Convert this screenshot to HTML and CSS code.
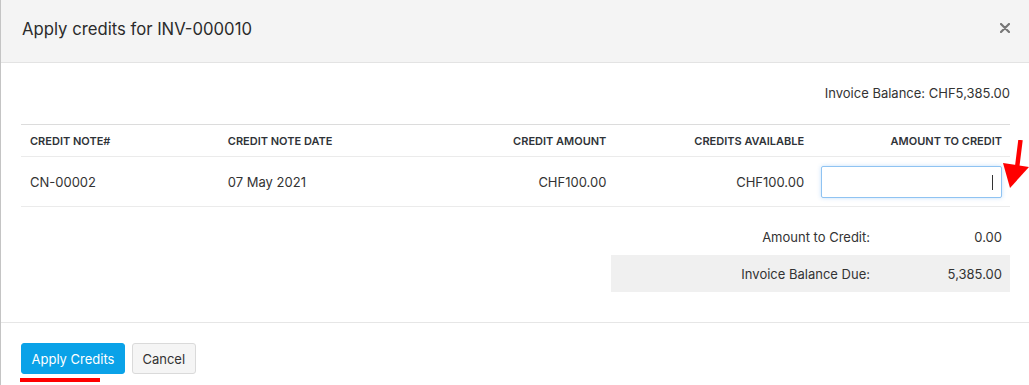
FILE: index.html
```html
<!DOCTYPE html>
<html lang="en">
<head>
  <meta charset="UTF-8" />
  <meta name="viewport" content="width=device-width, initial-scale=1.0" />
  <title>Apply Credits</title>
  <link rel="stylesheet" href="styles.css">
</head>
<body>
  <div class="modal">
    <div class="modal-header">
      <h4>Apply credits for INV-000010</h4>
      <button class="close" type="button" aria-label="Close">
        <svg width="10" height="10" viewBox="0 0 10 10">
          <path d="M1 1L9 9M9 1L1 9" stroke="#777" stroke-width="2.2" stroke-linecap="round" />
        </svg>
      </button>
    </div>

    <div class="modal-body">
      <div class="balance">Invoice Balance: CHF5,385.00</div>

      <table class="credits">
        <thead>
          <tr>
            <th>Credit Note#</th>
            <th>Credit Note Date</th>
            <th class="num">Credit Amount</th>
            <th class="num">Credits Available</th>
            <th class="num">Amount to Credit</th>
          </tr>
        </thead>
        <tbody>
          <tr>
            <td>CN-00002</td>
            <td>07 May 2021</td>
            <td class="num">CHF100.00</td>
            <td class="num">CHF100.00</td>
            <td class="input-cell">
              <input type="text" class="amount" />
              <span class="caret"></span>
              <svg class="arrow" width="26" height="50" viewBox="0 0 26 50">
                <path d="M17.5 0L14 28" stroke="#f00" stroke-width="4.5" />
                <path d="M0 23L26 27L7 48Z" fill="#f00" />
              </svg>
            </td>
          </tr>
        </tbody>
      </table>

      <div class="totals">
        <div class="total-row">
          <span class="label">Amount to Credit:</span>
          <span class="value">0.00</span>
        </div>
        <div class="total-row due">
          <span class="label">Invoice Balance Due:</span>
          <span class="value">5,385.00</span>
        </div>
      </div>
    </div>

    <div class="modal-footer">
      <button class="btn btn-primary" type="button">Apply Credits</button>
      <button class="btn btn-default" type="button">Cancel</button>
      <span class="underline"></span>
    </div>
  </div>
</body>
</html>
```

FILE: styles.css
```css
body {
  margin: 0;
  font-family: Inter, "Noto Sans", sans-serif;
  font-size: 13px;
  color: #333;
  background: #fff;
}

.modal {
  border-left: 1px solid #c4c4c4;
  height: 385px;
  box-sizing: border-box;
}

.modal-header {
  display: flex;
  justify-content: space-between;
  align-items: center;
  height: 62px;
  padding: 0 19px 0 21px;
  background: #f4f4f4;
  border-bottom: 1px solid #e3e3e3;
}

.modal-header h4 {
  margin: 0;
  font-size: 16.7px;
  font-weight: 400;
  color: #2b2b2b;
  padding-bottom: 4px;
}

.close {
  border: none;
  background: none;
  padding: 0;
  display: flex;
  margin-bottom: 6px;
}

.modal-body {
  padding: 20px 19px 30px 20px;
  border-bottom: 1px solid #e6e6e6;
}

.balance {
  text-align: right;
  line-height: 20px;
  margin-bottom: 21px;
}

.credits {
  width: 100%;
  border-collapse: collapse;
  table-layout: fixed;
}

.credits th,
.credits td {
  padding: 0 8px 0 9px;
  text-align: left;
}

.credits th {
  height: 31px;
  font-size: 11px;
  font-weight: 600;
  text-transform: uppercase;
  color: #2f3338;
  border-top: 1px solid #dcdcdc;
  border-bottom: 1px solid #ebebeb;
}

.credits td {
  height: 49px;
  border-bottom: 1px solid #ebebeb;
}

.credits .num {
  text-align: right;
}

.input-cell {
  position: relative;
}

.amount {
  display: block;
  width: 100%;
  height: 32px;
  box-sizing: border-box;
  border: 1px solid #8fc3f2;
  border-radius: 2px;
  box-shadow: 0 0 4px rgba(64, 150, 240, 0.3);
  outline: none;
}

.caret {
  position: absolute;
  right: 17px;
  top: 18px;
  width: 1px;
  height: 15px;
  background: #333;
}

.arrow {
  position: absolute;
  right: -19px;
  top: -17px;
}

.totals {
  margin: 12px 0 0 auto;
  width: 399px;
}

.total-row {
  display: grid;
  grid-template-columns: 1fr 140px;
  height: 36px;
  align-items: center;
}

.total-row.due {
  height: 37px;
  background: #f0f0f0;
}

.total-row .label,
.total-row .value {
  text-align: right;
}

.total-row .value {
  padding-right: 8px;
}

.modal-footer {
  position: relative;
  display: flex;
  gap: 7px;
  padding: 20px 20px;
}

.btn {
  height: 31px;
  padding: 0 9.5px;
  font-family: inherit;
  font-size: 13px;
  border-radius: 3px;
  white-space: nowrap;
}

.btn-primary {
  background: #0aa2e8;
  border: 1px solid #0aa2e8;
  color: #fff;
}

.btn-default {
  background: #f5f5f5;
  border: 1px solid #dadada;
  color: #333;
}

.underline {
  position: absolute;
  left: 19px;
  top: 55px;
  width: 80px;
  height: 4px;
  background: #f00;
}
```
